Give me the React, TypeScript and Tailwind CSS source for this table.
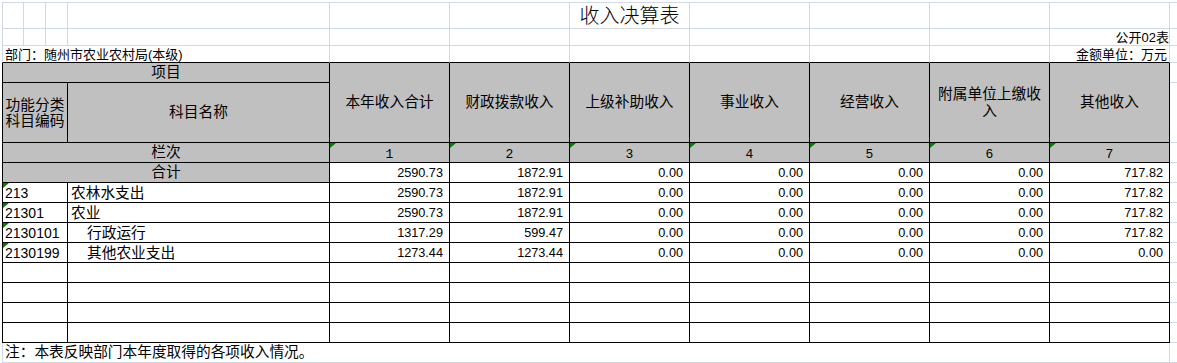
import clsx from 'clsx';
import type { ReactNode } from 'react';

const HEADERS: ReactNode[] = [
  '本年收入合计',
  '财政拨款收入',
  '上级补助收入',
  '事业收入',
  '经营收入',
  <>
    附属单位上缴收
    <br />入
  </>,
  '其他收入',
];

const TOTAL = ['2590.73', '1872.91', '0.00', '0.00', '0.00', '0.00', '717.82'];

const ROWS = [
  { code: '213', name: '农林水支出', indent: false, values: TOTAL },
  { code: '21301', name: '农业', indent: false, values: TOTAL },
  {
    code: '2130101',
    name: '行政运行',
    indent: true,
    values: ['1317.29', '599.47', '0.00', '0.00', '0.00', '0.00', '717.82'],
  },
  {
    code: '2130199',
    name: '其他农业支出',
    indent: true,
    values: ['1273.44', '1273.44', '0.00', '0.00', '0.00', '0.00', '0.00'],
  },
];

// little green "number stored as text" flag in the cell corner
function Flag() {
  return (
    <span className="absolute left-0 top-0 h-[5px] w-[6px] bg-[#008000] [clip-path:polygon(0_0,100%_0,0_100%)]" />
  );
}

function Spare() {
  // column past the table: only the sheet gridline
  return <div className="border-b border-[#d0d7e5]" />;
}

function NumCell({ value }: { value: string }) {
  return (
    <div className="flex items-end justify-end border-b border-r pb-[1px] pr-[6px] text-[12.7px] leading-[15px]">
      {value}
    </div>
  );
}

export default function App() {
  return (
    <div className="h-[363px] w-[1177px] overflow-hidden bg-white font-['Liberation_Sans','Noto_Sans_CJK_SC',sans-serif] text-black">
      <div className="ml-[2px] mt-[2px] grid grid-cols-[22px_22px_22px_262px_repeat(7,120px)_7px] grid-rows-[27px_17px_17px_20px_60px_repeat(11,20px)]">
        {/* ── Row 1: title ── */}
        {Array.from({ length: 12 }).map((_, i) => (
          <div
            key={`t${i}`}
            className={clsx(
              'border-b border-t border-[#d0d7e5]',
              i < 11 && 'border-r',
              i === 0 && 'border-l',
              i === 6 && 'flex items-end justify-center whitespace-nowrap pb-[1px] text-[20px] font-light leading-[22px]'
            )}
          >
            {i === 6 && '收入决算表'}
          </div>
        ))}

        {/* ── Row 2 ── */}
        {Array.from({ length: 12 }).map((_, i) => (
          <div
            key={`s${i}`}
            className={clsx(
              'border-b border-[#d0d7e5]',
              i < 11 && 'border-r',
              i === 0 && 'border-l',
              i === 10 && 'flex items-end justify-end whitespace-nowrap text-[13px] leading-[15px]'
            )}
          >
            {i === 10 && '公开02表'}
          </div>
        ))}

        {/* ── Row 3: department / unit ── */}
        <div className="col-span-4 flex items-end whitespace-nowrap border-b border-l border-r border-l-[#d0d7e5] border-r-[#d0d7e5] pl-[2px] text-[13px] leading-[15px]">
          部门：随州市农业农村局(本级)
        </div>
        {Array.from({ length: 6 }).map((_, i) => (
          <div key={`u${i}`} className="border-b border-r border-r-[#d0d7e5]" />
        ))}
        <div className="flex items-end justify-end whitespace-nowrap border-b border-r border-r-[#d0d7e5] pr-[2px] text-[13px] leading-[15px]">
          金额单位：万元
        </div>
        <Spare />

        {/* ── Header ── */}
        <div className="col-span-4 flex items-center justify-center border-b border-l border-r bg-[#c0c0c0] text-[14.7px]">
          项目
        </div>
        {HEADERS.map((h, i) => (
          <div
            key={`h${i}`}
            className="row-span-2 flex items-center justify-center border-b border-r bg-[#c0c0c0] text-center text-[14.7px] leading-[17px]"
          >
            <span>{h}</span>
          </div>
        ))}
        <Spare />
        <div className="col-span-3 flex items-center justify-center border-b border-l border-r bg-[#c0c0c0] text-center text-[14.7px] leading-[16px]">
          <span>
            功能分类
            <br />
            科目编码
          </span>
        </div>
        <div className="flex items-center justify-center border-b border-r bg-[#c0c0c0] text-[14.7px]">科目名称</div>
        <Spare />

        {/* ── 栏次 ── */}
        <div className="col-span-4 flex items-center justify-center border-b border-l border-r bg-[#c0c0c0] text-[14.7px]">
          栏次
        </div>
        {HEADERS.map((_, i) => (
          <div
            key={`n${i}`}
            className="relative flex items-end justify-center border-b border-r bg-[#c0c0c0] font-['Liberation_Mono',monospace] text-[13px] leading-[15px]"
          >
            <Flag />
            {i + 1}
          </div>
        ))}
        <Spare />

        {/* ── 合计 ── */}
        <div className="col-span-4 flex items-center justify-center border-b border-l border-r bg-[#c0c0c0] text-[14.7px]">
          合计
        </div>
        {TOTAL.map((v, i) => (
          <NumCell key={`c${i}`} value={v} />
        ))}
        <Spare />

        {/* ── Data rows ── */}
        {ROWS.map((r) => (
          <div key={r.code} className="contents">
            <div className="relative col-span-3 flex items-end border-b border-l border-r pb-[1px] pl-[2px] text-[14px] leading-[16px]">
              <Flag />
              {r.code}
            </div>
            <div
              className={clsx(
                'flex items-center border-b border-r pt-[1px] text-[14.7px] whitespace-nowrap',
                r.indent ? 'pl-[19px]' : 'pl-[3px]'
              )}
            >
              {r.name}
            </div>
            {r.values.map((v, i) => (
              <NumCell key={i} value={v} />
            ))}
            <Spare />
          </div>
        ))}

        {/* ── Empty rows ── */}
        {Array.from({ length: 4 }).map((_, k) => (
          <div key={`e${k}`} className="contents">
            <div className="col-span-3 border-b border-l border-r" />
            <div className="border-b border-r" />
            {Array.from({ length: 7 }).map((_, i) => (
              <div key={i} className="border-b border-r" />
            ))}
            <Spare />
          </div>
        ))}

        {/* ── Note ── */}
        <div className="col-span-11 flex items-center whitespace-nowrap border-b border-l border-r border-[#d0d7e5] pl-[2px] text-[14.7px]">
          注：本表反映部门本年度取得的各项收入情况。
        </div>
        <Spare />
      </div>
    </div>
  );
}
